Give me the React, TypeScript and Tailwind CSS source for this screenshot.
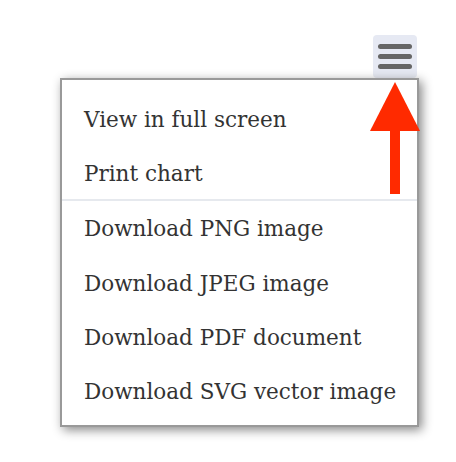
import React from "react";

const items2 = [
  "Download JPEG image",
  "Download PDF document",
  "Download SVG vector image",
];

export default function App() {
  return (
    <div className="relative w-[456px] h-[462px] bg-white" style={{ fontFamily: '"DejaVu Serif", serif' }}>
      <div className="pt-[35px] pl-[60px]">
        <div className="w-[359px] flex flex-col">
          <div className="self-end mr-[2px] w-[44px] h-[43px] rounded-[4px] bg-[#e6e9f3] flex flex-col items-center justify-center gap-[5px]">
            <div className="w-[34px] h-[5px] rounded-full bg-[#666666]" />
            <div className="w-[34px] h-[5px] rounded-full bg-[#666666]" />
            <div className="w-[34px] h-[5px] rounded-full bg-[#666666]" />
          </div>
          <div className="border-2 border-[#999999] bg-white shadow-[3px_3px_10px_#888888] pt-[13px] pb-[6px] text-[#333333] text-[21.5px] leading-none">
            <div className="h-[54px] flex items-center pl-[22px]">View in full screen</div>
            <div className="h-[52px] flex items-center pl-[22px] pt-[2px]">Print chart</div>
            <div className="h-[2px] bg-[#e6e9ee]" />
            <div className="h-[56px] flex items-center pl-[22px]">Download PNG image</div>
            {items2.map((t) => (
              <div key={t} className="h-[54px] flex items-center pl-[22px]">{t}</div>
            ))}
          </div>
        </div>
      </div>
      <svg className="absolute left-[370px] top-[82px]" width="50" height="113" viewBox="0 0 50 113">
        <polygon points="25,0 50,49 0,49" fill="#ff2a00" />
        <rect x="20" y="48" width="10" height="64" fill="#ff2a00" />
      </svg>
    </div>
  );
}
